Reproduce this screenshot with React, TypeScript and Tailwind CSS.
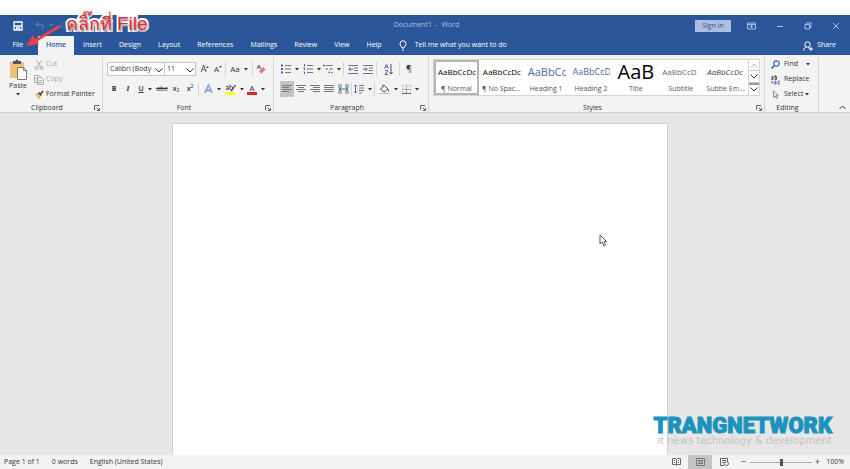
import type { ReactNode } from "react";

const TABS = ["Insert", "Design", "Layout", "References", "Mailings", "Review", "View", "Help"];

const STYLES = [
  { name: "¶ Normal", sample: "AaBbCcDc", look: "text-[8px] text-black" },
  { name: "¶ No Spac...", sample: "AaBbCcDc", look: "text-[8px] text-black" },
  { name: "Heading 1", sample: "AaBbCc", look: "text-[11px] text-[#4a6aa8]" },
  { name: "Heading 2", sample: "AaBbCcD", look: "text-[9px] text-[#4a6aa8]" },
  { name: "Title", sample: "AaB", look: "text-[20px] text-black" },
  { name: "Subtitle", sample: "AaBbCcD", look: "text-[8px] text-[#666]" },
  { name: "Subtle Em...", sample: "AaBbCcDc", look: "text-[8px] italic text-[#444]" },
];

function Svg({
  w = 12,
  h = 12,
  className = "",
  children,
}: {
  w?: number;
  h?: number;
  className?: string;
  children: ReactNode;
}) {
  return (
    <svg
      width={w}
      height={h}
      viewBox={`0 0 ${w} ${h}`}
      fill="none"
      stroke="currentColor"
      aria-hidden="true"
      className={`shrink-0 ${className}`}
    >
      {children}
    </svg>
  );
}

function Caret() {
  return (
    <Svg w={4} h={3}>
      <path d="M0 0h4L2 2.500z" fill="currentColor" stroke="none" />
    </Svg>
  );
}

function Chevron({ className = "" }: { className?: string }) {
  return (
    <Svg w={8} h={5} className={className}>
      <path d="M.5.5 4 4 7.500.5" />
    </Svg>
  );
}

// Small ribbon button, the label is only read out
function Tool({
  label,
  className = "w-3.5",
  children,
}: {
  label: string;
  className?: string;
  children: ReactNode;
}) {
  return (
    <button
      type="button"
      aria-label={label}
      className={`flex h-4 shrink-0 items-center justify-center gap-1 ${className}`}
    >
      {children}
    </button>
  );
}

function Divider() {
  return <span className="mx-px h-3.5 w-px shrink-0 bg-[#d4d4d4]" />;
}

function Group({
  title,
  launcher = true,
  className = "",
  children,
}: {
  title: string;
  launcher?: boolean;
  className?: string;
  children: ReactNode;
}) {
  return (
    <section
      aria-label={title}
      className={`relative flex shrink-0 flex-col border-r border-[#d4d4d4] ${className}`}
    >
      <div className="flex-1">{children}</div>
      <div className="h-2.5 pr-2 text-center leading-3">{title}</div>
      {launcher && (
        <button
          type="button"
          aria-label={`${title} settings`}
          className="absolute right-0.5 bottom-px text-[#666]"
        >
          <Svg w={6} h={6}>
            <path d="M.5 5V.5H5M2.500 2.500l3 3M5.500 3v2.500H3" />
          </Svg>
        </button>
      )}
    </section>
  );
}

function Lines({ rows }: { rows: [number, number][] }) {
  return (
    <Svg w={10} h={10}>
      {rows.map(([x, w], i) => (
        <path key={i} d={`M${x} ${1.5 + i * 2}h${w}`} stroke="#777" />
      ))}
    </Svg>
  );
}

function TitleBar() {
  return (
    <div className="flex h-[21px] items-center text-[#a9c0e6]">
      <div className="flex flex-1 items-center gap-3 pl-[13px]">
        <button type="button" aria-label="Save" className="text-white">
          <Svg w={10} h={10}>
            <path d="M1 1h8v8H1z" strokeWidth="1.300" />
            <path d="M1 5h8M3.500 9V7h3v2" strokeWidth="1.300" />
          </Svg>
        </button>
        <button type="button" aria-label="Undo" className="flex items-center gap-1 text-[#5479b8]">
          <Svg w={10} h={9}>
            <path d="M4 1 1 3.500 4 6M1 3.500h4.500c4 0 4 4.500.5 4.500" strokeWidth="1.200" />
          </Svg>
          <Caret />
        </button>
        <button type="button" aria-label="Redo" className="-ml-1 text-[#5479b8]">
          <Svg w={9} h={9}>
            <path d="M6 1h2v3M8 2C4-.5 1 2 1 4.500S5 9 7.500 6" />
          </Svg>
        </button>
      </div>
      <div>Document1&nbsp; -&nbsp; Word</div>
      <div className="flex flex-1 items-center justify-end pr-2.5">
        <button type="button" className="mr-4 h-3 w-9 bg-[#aabfdf] leading-3 text-[#2b579a]">
          Sign in
        </button>
        <button type="button" aria-label="Ribbon display options" className="mr-5">
          <Svg w={9} h={8}>
            <path d="M.5 1h8v6h-8zM.5 2.500h8M4.500 6V3.500M3 5l1.500-1.500L6 5" />
          </Svg>
        </button>
        <button type="button" aria-label="Minimize" className="mr-5">
          <Svg w={8} h={8}>
            <path d="M1 4.500h6" />
          </Svg>
        </button>
        <button type="button" aria-label="Restore" className="mr-5">
          <Svg w={8} h={8}>
            <path d="M1 2.500h4.500V7H1zM2.500 2.500V1H7v4.500H5.500" />
          </Svg>
        </button>
        <button type="button" aria-label="Close">
          <Svg w={8} h={8}>
            <path d="m1 1 6 6M7 1 1 7" />
          </Svg>
        </button>
      </div>
    </div>
  );
}

function TabBar() {
  return (
    <nav className="flex h-[19px] items-center gap-px font-medium text-white">
      <button type="button" className="h-full w-9 text-center">
        File
      </button>
      <button
        type="button"
        aria-current="page"
        className="ml-px h-full w-9 bg-[#f3f3f3] text-center font-semibold text-[#2b579a]"
      >
        Home
      </button>
      {TABS.map((t) => (
        <button key={t} type="button" className="h-full px-2">
          {t}
        </button>
      ))}
      <button type="button" className="ml-2 flex h-full items-center gap-2">
        <Svg w={8} h={11}>
          <path d="M3 8C3 6.500 1 6 1 3.800a3 3 0 0 1 6 0C7 6 5 6.500 5 8zM3 10h2" />
        </Svg>
        Tell me what you want to do
      </button>
      <button type="button" className="mr-3.5 ml-auto flex h-full items-center gap-1">
        <Svg w={10} h={10}>
          <circle cx="4.500" cy="3.500" r="2.700" />
          <path d="M.5 9.500c0-2 1.500-3.300 3-3.300M5 6.500l2 1M8 6v4M6 8h4" />
        </Svg>
        Share
      </button>
    </nav>
  );
}

function ClipboardGroup() {
  return (
    <Group title="Clipboard" className="w-[103px]">
      <div className="flex pl-2">
        <button type="button" className="flex w-5 flex-col items-center pt-0.5">
          <Svg w={20} h={21}>
            <path d="M2 3h14v16H2z" fill="#ecc273" stroke="none" />
            <path d="M5 2h2.500a1.500 1.500 0 0 1 3 0H13v3H5z" fill="#555" stroke="none" />
            <path d="M9.500 8.500h6l3 3v9h-9z" fill="#fff" stroke="#777" />
            <path d="M15.500 8.500v3h3" stroke="#777" />
          </Svg>
          <span className="leading-3">Paste</span>
          <span className="mt-px">
            <Caret />
          </span>
        </button>
        <div className="ml-1.5 flex flex-col text-[#a9a9a9]">
          <button type="button" className="flex h-[15px] items-center gap-0.5">
            <Svg w={10} h={10}>
              <path d="m2.500.5 4 6M7.500.5l-4 6" />
              <circle cx="2.500" cy="8" r="1.500" />
              <circle cx="7.500" cy="8" r="1.500" />
            </Svg>
            Cut
          </button>
          <button type="button" className="flex h-[15px] items-center gap-0.5">
            <Svg w={10} h={10}>
              <path d="M5 7.500H.5v-7H5l1 1V3M3.500 2.500h4l2 2v5h-6zM5 5.500h3M5 7.500h3M2 3h1M2 5h1" />
            </Svg>
            Copy
          </button>
          <button type="button" className="flex h-[15px] items-center gap-0.5 text-[#333]">
            <Svg w={10} h={10}>
              <path d="m1 4 3-1 3 3-2 3.500z" fill="#ecb862" stroke="none" />
              <path d="m4.500 2.500 3 3M6.500 4 9 1" stroke="#444" strokeWidth="1.600" />
            </Svg>
            Format Painter
          </button>
        </div>
      </div>
    </Group>
  );
}

function FontGroup() {
  return (
    <Group title="Font" className="w-[171px]">
      <div className="flex items-center pt-1 pl-1">
        <span className="relative">
          <select
            aria-label="Font name"
            className="block h-3.5 w-[58px] appearance-none border border-[#c6c6c6] bg-white pl-0.5 leading-3"
          >
            <option>Calibri (Body</option>
          </select>
          <Chevron className="pointer-events-none absolute top-1.5 right-0.5" />
        </span>
        <span className="relative">
          <select
            aria-label="Font size"
            className="block h-3.5 w-[31px] appearance-none border border-l-0 border-[#c6c6c6] bg-white pl-0.5 leading-3"
          >
            <option>11</option>
          </select>
          <Chevron className="pointer-events-none absolute top-1.5 right-0.5" />
        </span>
        <Tool label="Grow font" className="ml-0.5 w-3.5">
          <span className="text-[9px]">A</span>
          <Svg w={3} h={6} className="-ml-1">
            <path d="M0 2h3L1.500 0z" fill="#2b579a" stroke="none" />
          </Svg>
        </Tool>
        <Tool label="Shrink font" className="w-3">
          <span className="text-[8px]">A</span>
          <Svg w={3} h={6} className="-ml-1">
            <path d="M0 0h3L1.500 2z" fill="#2b579a" stroke="none" />
          </Svg>
        </Tool>
        <Divider />
        <Tool label="Change case" className="w-6">
          <span className="text-[8px]">Aa</span>
          <Caret />
        </Tool>
        <Divider />
        <Tool label="Clear formatting">
          <Svg w={10} h={10}>
            <path d="m1 5 2-4 2 4M2 3.500h2" stroke="#666" />
            <path d="m3 7 4-4 2.500 2.500-4 4z" fill="#e2798f" stroke="none" />
          </Svg>
        </Tool>
      </div>
      <div className="flex items-center pt-1 pl-1">
        <Tool label="Bold">
          <span className="font-bold">B</span>
        </Tool>
        <Tool label="Italic">
          <span className="font-serif text-[8px] font-bold italic">I</span>
        </Tool>
        <Tool label="Underline" className="w-5">
          <span className="font-semibold underline">U</span>
          <Caret />
        </Tool>
        <Tool label="Strikethrough">
          <span className="line-through">abc</span>
        </Tool>
        <Tool label="Subscript">
          <span className="font-semibold">
            x<sub className="text-[5px] text-[#2b579a]">2</sub>
          </span>
        </Tool>
        <Tool label="Superscript">
          <span className="font-semibold">
            x<sup className="text-[5px] text-[#2b579a]">2</sup>
          </span>
        </Tool>
        <Divider />
        <Tool label="Text effects" className="w-6">
          <Svg w={9} h={10}>
            <path d="M.8 9 4.500 1l3.700 8M2.500 6.500h4" stroke="#5b8fd0" strokeWidth="1.600" />
            <path d="M.8 9 4.500 1l3.700 8" stroke="#dce9f8" strokeWidth=".5" />
          </Svg>
          <Caret />
        </Tool>
        <Tool label="Highlight" className="w-5">
          <Svg w={11} h={11}>
            <path d="M1 2.500c2-1 2.500 0 2.500 1v2M3.500 4C1 4 .5 5.500 2 5.500L3.500 5M5 .5v5h1.500c1.500 0 1.500-3 0-3H5" stroke="#555" />
            <path d="M6 7.500 10.500 1" stroke="#555" strokeWidth="1.300" />
            <path d="M0 8h10v3H0z" fill="#fdf531" stroke="none" />
          </Svg>
          <Caret />
        </Tool>
        <Tool label="Font color" className="w-6">
          <span className="border-b-[3px] border-[#e0222c] px-0.5 text-[8px] leading-2">A</span>
          <Caret />
        </Tool>
      </div>
    </Group>
  );
}

function ParagraphGroup() {
  return (
    <Group title="Paragraph" className="w-[155px]">
      <div className="flex items-center pt-1 pl-1.5">
        <Tool label="Bullets" className="w-5">
          <Svg w={10} h={10}>
            <path d="M0 1.500h2M0 5h2M0 8.500h2" stroke="#3c6bb5" strokeWidth="2" />
            <path d="M4 1.500h6M4 5h6M4 8.500h6" stroke="#777" />
          </Svg>
          <Caret />
        </Tool>
        <Tool label="Numbering" className="ml-0.5 w-5">
          <Svg w={10} h={10}>
            <path d="M1.500 0v2.500M.5 4h1v2M.5 8h1v2" stroke="#3c6bb5" />
            <path d="M4 1.500h6M4 5h6M4 8.500h6" stroke="#777" />
          </Svg>
          <Caret />
        </Tool>
        <Tool label="Multilevel list" className="w-5">
          <Svg w={10} h={10}>
            <path d="M0 1.500h2M3 5h1.500M5.500 8.500H7" stroke="#3c6bb5" strokeWidth="1.500" />
            <path d="M3 1.500h7M6 5h4M8 8.500h2" stroke="#777" />
          </Svg>
          <Caret />
        </Tool>
        <Divider />
        <Tool label="Decrease indent" className="w-4">
          <Svg w={10} h={9}>
            <path d="M0 .5h10M6 3h4M6 5.500h4M0 8.500h10" stroke="#777" />
            <path d="M5 4.200H1M2.500 2.500.8 4.200 2.500 6" stroke="#2b6cc0" />
          </Svg>
        </Tool>
        <Tool label="Increase indent">
          <Svg w={10} h={9}>
            <path d="M0 .5h10M6 3h4M6 5.500h4M0 8.500h10" stroke="#777" />
            <path d="M0 4.200h4M2.500 2.500l1.700 1.700L2.500 6" stroke="#2b6cc0" />
          </Svg>
        </Tool>
        <Divider />
        <Tool label="Sort" className="w-5">
          <Svg w={9} h={11}>
            <path d="m.5 4.500 2-4 2 4M1.500 3h2" stroke="#3c6bb5" />
            <path d="M1 6.500h3l-3 4h3" stroke="#8a4fa8" />
            <path d="M7 0v10M5.500 8 7 10l1.500-2" stroke="#555" />
          </Svg>
        </Tool>
        <Divider />
        <Tool label="Show paragraph marks" className="w-4">
          <span className="text-[9px]">¶</span>
        </Tool>
      </div>
      <div className="flex items-center pt-1 pl-1.5">
        <Tool label="Align left" className="w-3.5 bg-[#c5c5c5]">
          <Lines rows={[[0, 10], [0, 7], [0, 10], [0, 7]]} />
        </Tool>
        <Tool label="Center">
          <Lines rows={[[0, 10], [2, 6], [0, 10], [2, 6]]} />
        </Tool>
        <Tool label="Align right">
          <Lines rows={[[0, 10], [3, 7], [0, 10], [3, 7]]} />
        </Tool>
        <Tool label="Justify">
          <Lines rows={[[0, 10], [0, 10], [0, 10], [0, 10]]} />
        </Tool>
        <Tool label="Distribute">
          <Svg w={11} h={10}>
            <path d="M0 1h4M7 1h4M0 3h4M7 3h4M0 7h4M7 7h4M0 9h4M7 9h4" stroke="#777" />
            <path d="M1 5h9M3 3.500 1 5l2 1.500M8 3.500 10 5 8 6.500" stroke="#3c6bb5" />
          </Svg>
        </Tool>
        <Divider />
        <Tool label="Line spacing" className="w-5">
          <Svg w={10} h={10}>
            <path d="M1.500 1v8M0 2.500 1.500 1 3 2.500M0 7.500 1.500 9 3 7.500" stroke="#3c6bb5" />
            <path d="M5 1.500h5M5 4h5M5 6.500h5M5 9h3" stroke="#777" />
          </Svg>
          <Caret />
        </Tool>
        <Divider />
        <Tool label="Shading" className="w-6">
          <Svg w={11} h={11}>
            <path d="m1.500 5 4-3.500L9 5 5 8zM4 3V.5" stroke="#555" />
            <path d="M9 5c1 1.500 1 3 0 3" stroke="#3c6bb5" />
            <path d="M0 9.500h10" stroke="#bbb" />
          </Svg>
          <Caret />
        </Tool>
        <Tool label="Borders" className="w-5">
          <Svg w={9} h={9}>
            <path d="M.5.5h8v8M.5.500v8" stroke="#aaa" strokeDasharray="1 1" />
            <path d="M4.500 1v7M1 4.500h7" stroke="#aaa" />
            <path d="M0 8.500h9" stroke="#666" />
          </Svg>
          <Caret />
        </Tool>
      </div>
    </Group>
  );
}

function StylesGroup() {
  return (
    <Group title="Styles" className="w-[336px]">
      <div className="mt-0.5 ml-1 flex h-[37px] w-[327px] border border-[#d4d4d4] bg-white">
        {STYLES.map((s, i) => (
          <button
            key={s.name}
            type="button"
            className={`flex min-w-0 flex-1 flex-col border-2 px-px ${
              i === 0 ? "border-[#b5b5b5]" : "border-transparent"
            }`}
          >
            {s.sample === "AaB" ? (
              <span className={`h-5 w-full text-center leading-5 ${s.look}`}>{s.sample}</span>
            ) : (
              <span
                className={`flex h-5 w-full items-center overflow-x-clip pl-px leading-5 whitespace-nowrap ${s.look}`}
              >
                {s.sample}
              </span>
            )}
            <span className="w-full text-center leading-[13px] whitespace-nowrap text-[#555]">
              {s.name}
            </span>
          </button>
        ))}
        <div className="flex w-[11px] flex-col border-l border-[#d4d4d4]">
          <button
            type="button"
            aria-label="Scroll up"
            className="flex flex-1 items-center justify-center text-[#b5b5b5]"
          >
            <Chevron className="rotate-180" />
          </button>
          <button
            type="button"
            aria-label="Scroll down"
            className="flex flex-1 items-center justify-center border-y border-[#c6c6c6]"
          >
            <Chevron />
          </button>
          <button
            type="button"
            aria-label="More styles"
            className="flex flex-1 items-center justify-center border-t-2 border-[#999]"
          >
            <Chevron />
          </button>
        </div>
      </div>
    </Group>
  );
}

function EditingGroup() {
  return (
    <Group title="Editing" launcher={false} className="w-[54px]">
      <div className="flex flex-col pl-1.5">
        <button type="button" className="flex h-[15px] items-center gap-1">
          <Svg w={9} h={9}>
            <circle cx="5.500" cy="3.500" r="2.700" stroke="#3c6bb5" strokeWidth="1.200" />
            <path d="M3.500 5.500.5 8.500" stroke="#3c6bb5" strokeWidth="1.600" />
          </Svg>
          Find
          <span className="ml-1">
            <Caret />
          </span>
        </button>
        <button type="button" className="flex h-[15px] items-center gap-1">
          <Svg w={9} h={10}>
            <path d="M.5 1.500h1.500v3H.8v-1.500H2M4 0v4.500h1.500v-3H4" stroke="#555" />
            <path d="M3.500 6H5v3H3.800V7.500H5M9 6.200H7.300V9H9" stroke="#8a4fa8" />
            <path d="M1 6v2h1.500" stroke="#3c6bb5" />
          </Svg>
          Replace
        </button>
        <button type="button" className="flex h-[15px] items-center gap-1">
          <Svg w={9} h={9}>
            <path d="M2.500.8v6.700l1.700-1.500 1.300 2.500 1-.5-1.200-2.500h2z" stroke="#777" strokeWidth=".8" />
          </Svg>
          Select
          <span className="-ml-0.5">
            <Caret />
          </span>
        </button>
      </div>
    </Group>
  );
}

function StatusBar() {
  return (
    <footer className="flex h-3.5 shrink-0 items-center bg-[#f3f3f3] pr-1.5 pl-1">
      <span>Page 1 of 1</span>
      <span className="ml-3">0 words</span>
      <span className="ml-3">English (United States)</span>
      <button
        type="button"
        aria-label="Read mode"
        className="ml-auto flex h-full w-6 items-center justify-center text-[#666]"
      >
        <Svg w={9} h={8}>
          <path d="M4.500 1.500v6M.5.500h3l1 1 1-1h3v6h-3l-1 1-1-1h-3zM2 2.500h1M2 4.500h1M6 2.500h1M6 4.500h1" />
        </Svg>
      </button>
      <button
        type="button"
        aria-label="Print layout"
        className="flex h-full w-6 items-center justify-center bg-[#c5c5c5] text-[#777]"
      >
        <Svg w={9} h={8}>
          <path d="M.5.500h8v7h-8zM2 2.500h5M2 4h5M2 5.500h5" />
        </Svg>
      </button>
      <button
        type="button"
        aria-label="Web layout"
        className="flex h-full w-6 items-center justify-center text-[#666]"
      >
        <Svg w={9} h={8}>
          <path d="M4 7.500H.5v-7h7V3M2 2.500h4M2 4.500h2" />
          <circle cx="6.500" cy="5.500" r="2" />
        </Svg>
      </button>
      <button type="button" aria-label="Zoom out" className="ml-0.5 w-2.5 text-[9px] leading-3">
        −
      </button>
      <input
        type="range"
        aria-label="Zoom"
        defaultValue={50}
        className="ml-0.5 h-2 w-[62px] appearance-none bg-transparent [&::-webkit-slider-runnable-track]:h-px [&::-webkit-slider-runnable-track]:bg-[#aaa] [&::-webkit-slider-thumb]:-mt-[3px] [&::-webkit-slider-thumb]:h-[7px] [&::-webkit-slider-thumb]:w-[3px] [&::-webkit-slider-thumb]:appearance-none [&::-webkit-slider-thumb]:bg-[#555]"
      />
      <button type="button" aria-label="Zoom in" className="w-2.5 text-[9px] leading-3">
        +
      </button>
      <span className="ml-1">100%</span>
    </footer>
  );
}

export default function App() {
  return (
    <div className="relative flex h-screen flex-col overflow-hidden bg-[#e6e6e6] pt-[15px] font-['Open_Sans','Noto_Sans',sans-serif] text-[7px] text-[#333]">
      <div className="absolute inset-x-0 top-0 h-[15px] bg-white" />

      <header className="shrink-0 bg-[#2b579a]">
        <TitleBar />
        <TabBar />
      </header>

      {/* Ribbon */}
      <div className="flex h-[58px] shrink-0 border-b border-[#d0d0d0] bg-[#f3f3f3] pt-0.5">
        <ClipboardGroup />
        <FontGroup />
        <ParagraphGroup />
        <StylesGroup />
        <EditingGroup />
        <button type="button" aria-label="Collapse the ribbon" className="mr-1 mb-0.5 ml-auto self-end">
          <Svg w={7} h={5}>
            <path d="M.5 4 3.500 1l3 3" />
          </Svg>
        </button>
      </div>

      {/* Document */}
      <main className="flex flex-1 justify-center pt-2.5 pr-2.5">
        <div className="w-[59%] border border-b-0 border-[#d0d0d0] bg-white" />
      </main>

      <StatusBar />

      {/* Instruction and arrow on top of the window */}
      <svg
        width="36"
        height="24"
        viewBox="0 0 36 24"
        className="absolute top-[25px] left-[26px]"
        aria-hidden="true"
      >
        <path d="M34 1 9 16" stroke="#e8404a" strokeWidth="3" />
        <path d="m0 21 7-11 6 9z" fill="#e8404a" />
      </svg>
      <div className="absolute top-[12px] left-[66px] font-['Liberation_Sans',sans-serif] text-[18px] leading-6 whitespace-nowrap text-[#e02b36] [-webkit-text-stroke:4px_white] [paint-order:stroke_fill] [text-shadow:1px_2px_2px_rgba(0,0,0,0.5)]">
        คลิ๊กที่ <span className="text-[19px]">File</span>
      </div>

      <svg
        width="8"
        height="13"
        viewBox="0 0 8 13"
        className="absolute top-[234px] left-[599px]"
        aria-hidden="true"
      >
        <path d="M1 1v9l2-2 2 4 1.500-1L5 7.500h2.500z" fill="#fff" stroke="#555" />
      </svg>

      <div className="absolute right-[18px] bottom-[23px] text-right">
        <div className="font-['Roboto',sans-serif] text-[22px] leading-5 font-black text-[#1b93bd] [-webkit-text-stroke:1px_#1b93bd]">
          TRANGNETWORK
        </div>
        <div className="font-['DejaVu_Sans',sans-serif] text-[10px] leading-[10px] text-[#c4c4c4]">
          it news technology &amp; development
        </div>
      </div>
    </div>
  );
}
